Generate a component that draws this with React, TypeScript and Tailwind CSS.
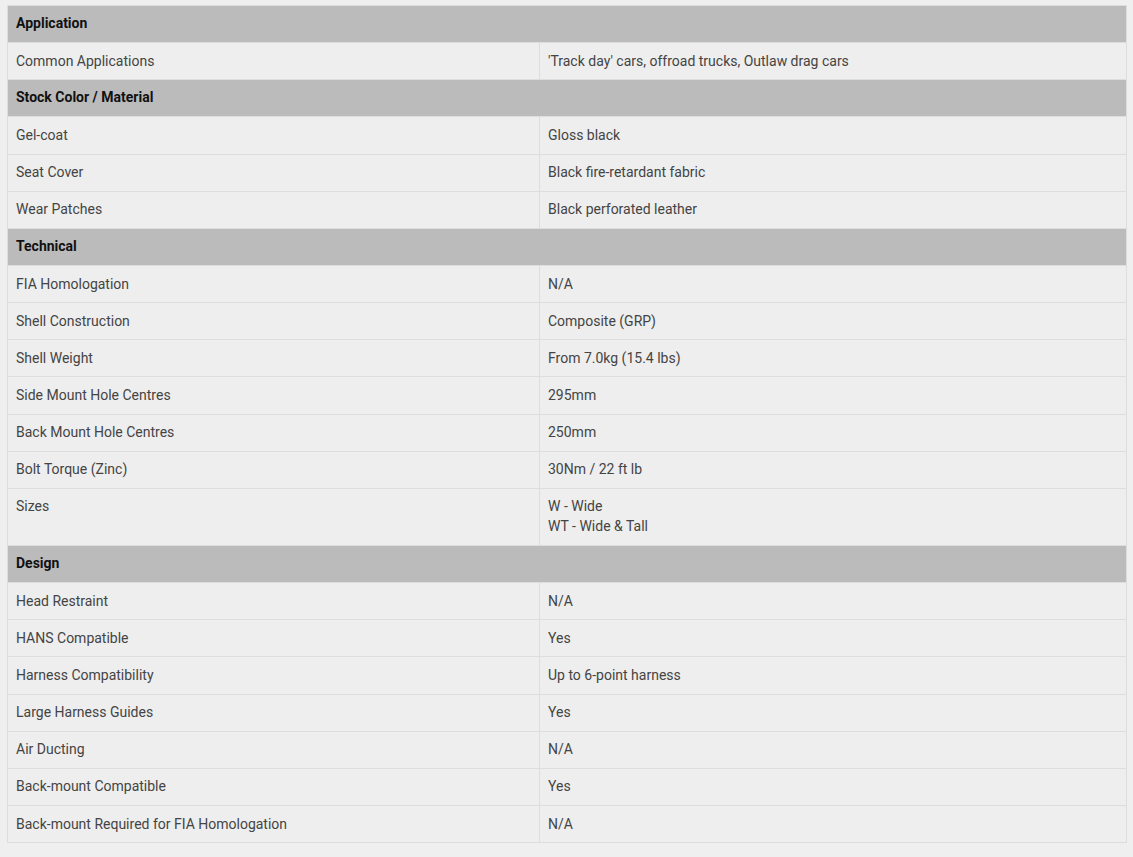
import React from "react";

type Row = { h?: string; k?: string; v?: React.ReactNode };

const rows: Row[] = [
  { h: "Application" },
  { k: "Common Applications", v: "'Track day' cars, offroad trucks, Outlaw drag cars" },
  { h: "Stock Color / Material" },
  { k: "Gel-coat", v: "Gloss black" },
  { k: "Seat Cover", v: "Black fire-retardant fabric" },
  { k: "Wear Patches", v: "Black perforated leather" },
  { h: "Technical" },
  { k: "FIA Homologation", v: "N/A" },
  { k: "Shell Construction", v: "Composite (GRP)" },
  { k: "Shell Weight", v: "From 7.0kg (15.4 lbs)" },
  { k: "Side Mount Hole Centres", v: "295mm" },
  { k: "Back Mount Hole Centres", v: "250mm" },
  { k: "Bolt Torque (Zinc)", v: "30Nm / 22 ft lb" },
  {
    k: "Sizes",
    v: (
      <>
        W - Wide
        <br />
        WT - Wide &amp; Tall
      </>
    ),
  },
  { h: "Design" },
  { k: "Head Restraint", v: "N/A" },
  { k: "HANS Compatible", v: "Yes" },
  { k: "Harness Compatibility", v: "Up to 6-point harness" },
  { k: "Large Harness Guides", v: "Yes" },
  { k: "Air Ducting", v: "N/A" },
  { k: "Back-mount Compatible", v: "Yes" },
  { k: "Back-mount Required for FIA Homologation", v: "N/A" },
];

export default function App() {
  return (
    <div
      className="min-h-[857px] w-full bg-[#efefef] pt-[5px] pl-[7px]"
      style={{ fontFamily: "Roboto, 'Liberation Sans', sans-serif" }}
    >
      <table className="w-[1120px] border-collapse text-[14px] leading-[20px]">
        <tbody>
          {rows.map((r, i) =>
            r.h ? (
              <tr key={i}>
                <th
                  colSpan={2}
                  className="border border-[#dddddd] bg-[#bbbbbb] px-2 pt-[7px] pb-[9.15px] text-left font-bold text-[#111111]"
                >
                  {r.h}
                </th>
              </tr>
            ) : (
              <tr key={i}>
                <td className="w-[532px] border border-[#dddddd] bg-[#eeeeee] px-2 pt-[7.6px] pb-[8.55px] align-top text-[#444444]">
                  {r.k}
                </td>
                <td className="border border-[#dddddd] bg-[#eeeeee] px-2 pt-[7.6px] pb-[8.55px] align-top text-[#444444]">
                  {r.v}
                </td>
              </tr>
            )
          )}
        </tbody>
      </table>
    </div>
  );
}
